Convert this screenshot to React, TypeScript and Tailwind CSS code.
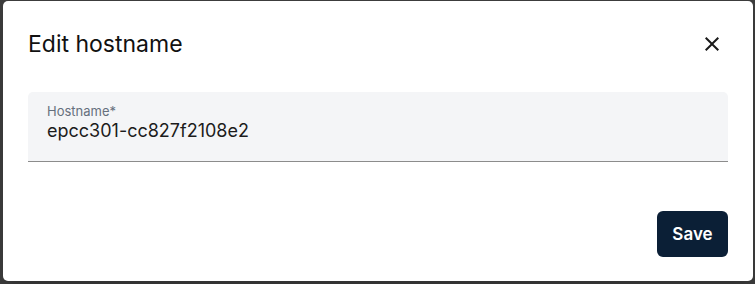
import React, { useState } from 'react';

const CloseIcon: React.FC = () => (
  <svg viewBox="0 0 24 24" className="h-6 w-6" fill="currentColor">
    <path d="M19 6.41 17.59 5 12 10.59 6.41 5 5 6.41 10.59 12 5 17.59 6.41 19 12 13.41 17.59 19 19 17.59 13.41 12z" />
  </svg>
);

const EditHostnameDialog: React.FC = () => {
  const [hostname, setHostname] = useState('epcc301-cc827f2108e2');

  return (
    <div className="flex h-[280px] w-[750px] flex-col rounded-[5px] bg-white px-[25px] pt-[25px] pb-[24px] shadow-xl">
      {/* Header */}
      <div className="flex h-9 items-center justify-between">
        <h2 className="text-[23px] font-normal text-[#111111]">Edit hostname</h2>
        <button className="mr-[-2px] flex h-9 w-9 items-center justify-center text-[#1a1a1a]">
          <CloseIcon />
        </button>
      </div>

      {/* Hostname field */}
      <div className="mt-[30px] flex flex-col rounded-t-[5px] border-b border-[#8c8c8c] bg-[#f4f5f7] pt-[11px] pr-3 pb-[18px] pl-[19px]">
        <label className="text-[13px] leading-4 text-[#66707d]">Hostname*</label>
        <input
          value={hostname}
          onChange={(e) => setHostname(e.target.value)}
          className="bg-transparent p-0 text-[18px] leading-6 text-[#1c1c1c] outline-none"
        />
      </div>

      {/* Footer */}
      <div className="mt-auto flex justify-end">
        <button className="h-[46px] w-[71px] rounded-[6px] bg-[#0b1f36] pt-[2px] text-[17px] font-semibold text-white">
          Save
        </button>
      </div>
    </div>
  );
};

const App: React.FC = () => {
  return (
    <div
      className="flex h-[284px] w-[755px] items-start bg-[#3c3c3c] pt-px pl-[3px]"
      style={{ fontFamily: 'Inter, "Liberation Sans", sans-serif' }}
    >
      <EditHostnameDialog />
    </div>
  );
};

export default App;
